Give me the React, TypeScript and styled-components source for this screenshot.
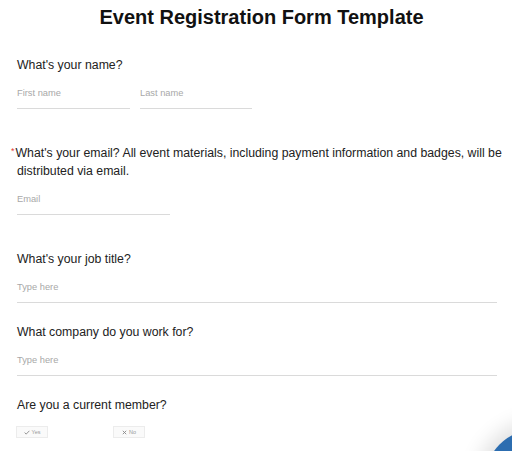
import React from "react";
import styled, { createGlobalStyle } from "styled-components";

const Global = createGlobalStyle`
  html, body { margin: 0; padding: 0; background: #fff; }
  body { font-family: "Liberation Sans", Arial, sans-serif; overflow: hidden; }
`;

const Page = styled.div`
  padding: 5px 0 0 17px;
  width: 512px;
  box-sizing: border-box;
`;

const Title = styled.h1`
  margin: 0 0 0 -6px;
  font-size: 20px;
  line-height: 24px;
  font-weight: 700;
  color: #111;
  text-align: center;
`;

const Section = styled.section<{ $gap: number }>`
  margin-top: ${(p) => p.$gap}px;
`;

const Question = styled.div`
  font-size: 12.3px;
  line-height: 18px;
  color: #222;
`;

const Required = styled.span`
  color: #e53935;
  font-size: 9px;
  line-height: 8px;
  vertical-align: top;
  margin-left: -6px;
  margin-right: 1px;
  position: relative;
  top: 3px;
`;

const FieldRow = styled.div`
  display: flex;
  gap: 10px;
  margin-top: 11px;
  padding-right: 15px;
`;

const Field = styled.div<{ $width?: number }>`
  ${(p) => (p.$width ? `width: ${p.$width}px;` : "flex: 1;")}
  font-size: 9.3px;
  line-height: 16px;
  color: #a8a8a8;
  padding-bottom: 7px;
  border-bottom: 1px solid #dadada;
`;

const Choices = styled.div`
  display: flex;
  gap: 66px;
  margin-top: 12px;
`;

const Choice = styled.div`
  width: 30px;
  height: 10px;
  margin-left: -1px;
  border: 1px solid #ececec;
  background: #fafafa;
  display: flex;
  align-items: center;
  justify-content: center;
  gap: 2px;
  font-size: 5.5px;
  color: #999;
`;

const ChatBubble = styled.div`
  position: fixed;
  right: -78px;
  bottom: -84px;
  width: 106px;
  height: 106px;
  border-radius: 50%;
  background: #2c6db0;
  box-shadow: 0 0 20px 8px rgba(0, 0, 0, 0.12);
`;

const Check = () => (
  <svg width="6" height="5" viewBox="0 0 6 5">
    <path d="M0.6 2.6 L2.2 4.1 L5.4 0.8" fill="none" stroke="#888" strokeWidth="0.9" />
  </svg>
);

const Cross = () => (
  <svg width="5" height="5" viewBox="0 0 5 5">
    <path d="M0.8 0.8 L4.2 4.2 M4.2 0.8 L0.8 4.2" fill="none" stroke="#888" strokeWidth="0.9" />
  </svg>
);

export default function App() {
  return (
    <>
      <Global />
      <Page>
        <Title>Event Registration Form Template</Title>

        <Section $gap={27}>
          <Question>What's your name?</Question>
          <FieldRow>
            <Field $width={113}>First name</Field>
            <Field $width={112}>Last name</Field>
          </FieldRow>
        </Section>

        <Section $gap={35}>
          <Question>
            <Required>*</Required>
            What's your email? All event materials, including payment information and badges, will be
            distributed via email.
          </Question>
          <FieldRow>
            <Field $width={153}>Email</Field>
          </FieldRow>
        </Section>

        <Section $gap={35}>
          <Question>What's your job title?</Question>
          <FieldRow>
            <Field>Type here</Field>
          </FieldRow>
        </Section>

        <Section $gap={20}>
          <Question>What company do you work for?</Question>
          <FieldRow>
            <Field>Type here</Field>
          </FieldRow>
        </Section>

        <Section $gap={20}>
          <Question>Are you a current member?</Question>
          <Choices>
            <Choice>
              <Check />
              Yes
            </Choice>
            <Choice>
              <Cross />
              No
            </Choice>
          </Choices>
        </Section>
      </Page>
      <ChatBubble />
    </>
  );
}
